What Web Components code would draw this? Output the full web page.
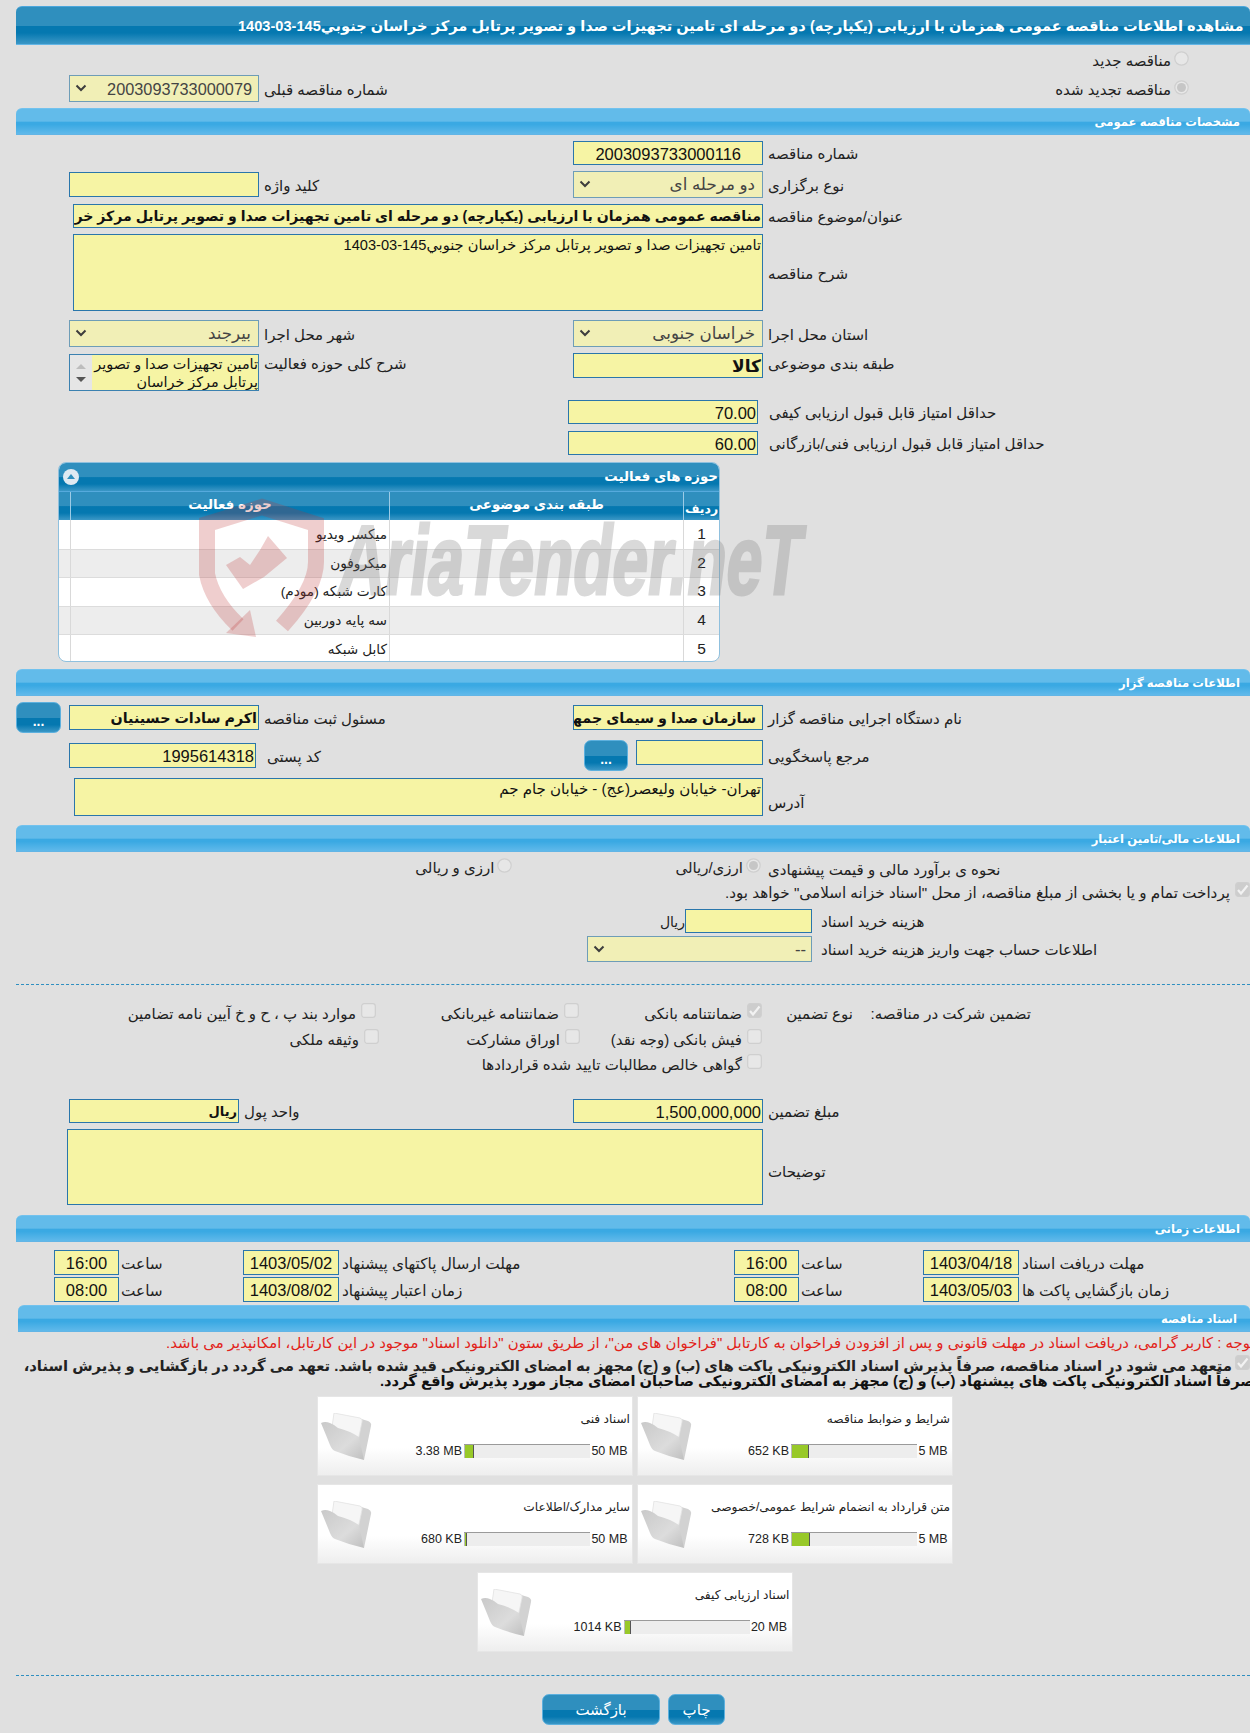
<!DOCTYPE html>
<html lang="fa">
<head>
<meta charset="utf-8">
<title>tender</title>
<style>
  html, body { margin: 0; padding: 0; background: #e0e0e0; }
</style>
</head>
<body>
<tender-page>
  <tender-bar kind="main" offset="222" style="margin-top:6px">مشاهده اطلاعات مناقصه عمومی همزمان با ارزیابی (یکپارچه) دو مرحله ای تامین تجهیزات صدا و تصویر پرتابل مرکز خراسان جنوبي145-03-1403</tender-bar>

  <form-row style="margin-top:6px;height:15px"><flag-item type="radio" style="grid-column:1;margin-right:61px">مناقصه جدید</flag-item></form-row>
  <form-row style="margin-top:9px;height:27px">
    <flag-item type="radio" checked style="grid-column:1;margin:5px 61px 0 0;align-self:start">مناقصه تجدید شده</flag-item>
    <field-label style="grid-column:3">شماره مناقصه قبلی</field-label>
    <field-box kind="select" num pad="6" style="grid-column:4;font-size:16.3px">2003093733000079</field-box>
  </form-row>
  <tender-bar style="margin-top:6px">مشخصات مناقصه عمومی</tender-bar>

  <form-row style="margin-top:6px;height:24px">
    <field-label>شماره مناقصه</field-label>
    <field-box num pad="21">2003093733000116</field-box>
  </form-row>
  <form-row style="margin-top:6px;height:27px">
    <field-label>نوع برگزاری</field-label>
    <field-box kind="select">دو مرحله ای</field-box>
    <field-label>کلید واژه</field-label>
    <field-box style="height:25px;margin-top:1px"></field-box>
  </form-row>
  <form-row wide style="margin-top:6px;height:24px">
    <field-label>عنوان/موضوع مناقصه</field-label>
    <field-box bold style="font-size:14.1px">مناقصه عمومی همزمان با ارزیابی (یکپارچه) دو مرحله ای تامین تجهیزات صدا و تصویر پرتابل مرکز خراسان جنوبي145-03-1403</field-box>
  </form-row>
  <form-row wide style="margin-top:6px;height:77px">
    <field-label>شرح مناقصه</field-label>
    <field-box kind="area" style="font-size:14.6px">تامین تجهیزات صدا و تصویر پرتابل مرکز خراسان جنوبي145-03-1403</field-box>
  </form-row>
  <form-row style="margin-top:9px;height:27px">
    <field-label>استان محل اجرا</field-label>
    <field-box kind="select">خراسان جنوبی</field-box>
    <field-label>شهر محل اجرا</field-label>
    <field-box kind="select">بیرجند</field-box>
  </form-row>
  <form-row style="margin-top:6px;height:25px">
    <field-label align="start">طبقه بندی موضوعی</field-label>
    <field-box bold style="height:25px;font-size:17px">کالا</field-box>
    <field-label align="start">شرح کلی حوزه فعالیت</field-label>
    <list-box style="height:37px;margin-top:1px">تامین تجهیزات صدا و تصویر پرتابل مرکز خراسان</list-box>
  </form-row>

  <score-row style="margin-top:22px" label="حداقل امتیاز قابل قبول ارزیابی کیفی">70.00</score-row>
  <score-row style="margin-top:7px" label="حداقل امتیاز قابل قبول ارزیابی فنی/بازرگانی">60.00</score-row>

  <activity-table style="margin-top:7px"></activity-table>

  <tender-bar style="margin-top:7px">اطلاعات مناقصه گزار</tender-bar>

  <form-row style="margin-top:6px;height:31px">
    <field-label style="height:25px;margin-top:3px">نام دستگاه اجرایی مناقصه گزار</field-label>
    <field-box bold pad="6" style="height:25px;margin-top:3px">سازمان صدا و سیمای جمهوری اسلامی ایران</field-box>
    <field-label style="height:25px;margin-top:3px">مسئول ثبت مناقصه</field-label>
    <field-box bold style="height:25px;margin-top:3px">اکرم سادات حسینیان</field-box>
    <tender-button style="margin-right:8px;width:45px;height:31px">...</tender-button>
  </form-row>
  <form-row style="margin-top:7px;height:31px">
    <field-label style="height:25px;margin-top:3px">مرجع پاسخگویی</field-label>
    <div style="display:flex;flex-direction:row;height:31px;width:190px">
      <field-box style="flex:0 0 127px;height:25px"></field-box>
      <tender-button style="margin-right:8px;width:44px;height:31px">...</tender-button>
    </div>
    <field-label style="height:25px;margin-top:3px;padding-left:8px">کد پستی</field-label>
    <field-box num style="height:25px;margin-top:3px;width:187px;justify-self:end">1995614318</field-box>
  </form-row>
  <form-row wide style="margin-top:7px;height:38px">
    <field-label style="margin-top:10px">آدرس</field-label>
    <field-box kind="area" style="margin-left:1px;font-size:15px">تهران- خیابان ولیعصر(عج) - خیابان جام جم</field-box>
  </form-row>
  <tender-bar style="margin-top:9px">اطلاعات مالی/تامین اعتبار</tender-bar>

  <form-row wide style="margin-top:6px;height:22px">
    <field-label>نحوه ی برآورد مالی و قیمت پیشنهادی</field-label>
    <div style="display:flex;gap:163px">
      <flag-item type="radio" checked style="margin-right:2px">ارزی/ریالی</flag-item>
      <flag-item type="radio">ارزی و ریالی</flag-item>
    </div>
  </form-row>
  <flag-item type="check" checked style="margin-top:2px;height:23px;font-size:15.2px">پرداخت تمام و یا بخشی از مبلغ مناقصه، از محل "اسناد خزانه اسلامی" خواهد بود.</flag-item>
  <form-row style="margin-top:4px;height:24px">
    <field-label style="padding-left:58px">هزینه خرید اسناد</field-label>
    <div style="grid-column:2 / 4;display:flex;margin-right:-49px;height:24px">
      <field-box style="flex:0 0 127px"></field-box>
      <span style="font-size:14px;line-height:27px;color:#222">ریال</span>
    </div>
  </form-row>
  <form-row style="margin-top:3px;height:26px">
    <field-label style="padding-left:58px">اطلاعات حساب جهت واریز هزینه خرید اسناد</field-label>
    <field-box kind="select" pad="5" style="grid-column:2 / 4;margin-right:-49px;margin-left:328px">--</field-box>
  </form-row>

  <dash-line style="margin-top:22px"></dash-line>

  <guarantee-panel style="margin-top:18px"></guarantee-panel>

  <form-row style="margin-top:21px;height:24px">
    <field-label>مبلغ تضمین</field-label>
    <field-box num>1,500,000,000</field-box>
    <field-label style="padding-left:0;margin-left:-15px">واحد پول</field-label>
    <field-box bold style="width:170px;justify-self:end;font-size:13px">ریال</field-box>
  </form-row>
  <form-row wide style="margin-top:6px;height:76px">
    <field-label style="margin-top:8px">توضیحات</field-label>
    <field-box kind="area" style="margin-left:-6px"></field-box>
  </form-row>
  <tender-bar style="margin-top:10px">اطلاعات زمانی</tender-bar>

  <time-row style="margin-top:8px;height:25px" label-a="مهلت دریافت اسناد" date-a="1403/04/18" time-a="16:00" label-b="مهلت ارسال پاکتهای پیشنهاد" date-b="1403/05/02" time-b="16:00"></time-row>
  <time-row style="margin-top:2px;height:25px" label-a="زمان بازگشایی پاکت ها" date-a="1403/05/03" time-a="08:00" label-b="زمان اعتبار پیشنهاد" date-b="1403/08/02" time-b="08:00"></time-row>

  <tender-bar inset style="margin-top:3px">اسناد مناقصه</tender-bar>

  <doc-notes></doc-notes>

  <doc-grid style="margin-top:3px">
    <doc-card name="شرایط و ضوابط مناقصه" used="652 KB" limit="5 MB" fill="14"></doc-card>
    <doc-card name="اسناد فنی" used="3.38 MB" limit="50 MB" fill="8"></doc-card>
    <doc-card name="متن قرارداد به انضمام شرایط عمومی/خصوصی" used="728 KB" limit="5 MB" fill="15"></doc-card>
    <doc-card name="سایر مدارک/اطلاعات" used="680 KB" limit="50 MB" fill="2"></doc-card>
    <doc-card name="اسناد ارزیابی کیفی" used="1014 KB" limit="20 MB" fill="6" style="grid-column:1 / 3;justify-self:center"></doc-card>
  </doc-grid>

  <dash-line style="margin-top:23px"></dash-line>

  <div style="display:flex;direction:rtl;justify-content:flex-start;gap:8px;margin-top:18px;padding-right:525px">
    <tender-button style="width:57px;height:31px" big>چاپ</tender-button>
    <tender-button style="width:118px;height:31px" big>بازگشت</tender-button>
  </div>

  <water-mark></water-mark>
</tender-page>

<script>
(function () {
  const FONT = "'Liberation Sans','DejaVu Sans',sans-serif";

  class TenderPage extends HTMLElement {
    constructor() {
      super();
      this.attachShadow({ mode: "open" }).innerHTML = `
      <style>
        :host { display: block; position: relative; width: 1250px; height: 1733px; overflow: hidden; background: #e0e0e0; font-family: ${FONT}; color: #222; }
        .wrap { display: flow-root; }
      </style>
      <div class="wrap"><slot></slot></div>`;
    }
  }

  class TenderBar extends HTMLElement {
    constructor() {
      super();
      const main = this.getAttribute("kind") === "main";
      const inset = this.hasAttribute("inset");
      const offset = this.getAttribute("offset");
      this.attachShadow({ mode: "open" }).innerHTML = `
      <style>
        :host { display: flex; box-sizing: border-box; margin-left: ${inset ? 18 : 16}px; height: ${main ? 39 : 27}px; border-radius: 6px 6px 0 0; align-items: center; color: #fff; font-weight: bold; white-space: nowrap; overflow: hidden;
          background: ${main
            ? "linear-gradient(#2f8fbe 0,#2f8fbe 50%,#0578b0 52%,#0578b0 70%,#3b97c6 100%)"
            : "linear-gradient(#62bbea 0,#62bbea 49%,#3aa9e3 52%,#3aa9e3 62%,#60b9ea 100%)"};
          border-top: 1px solid ${main ? "#4ca6dc" : "#72c2ee"}; border-bottom: 1px solid #62b5e6; }
        :host { justify-content: ${offset ? "flex-start" : "flex-end"}; padding: ${offset ? "0 0 0 " + offset + "px" : "0 " + (inset ? 13 : 10) + "px 0 0"}; font-size: ${main ? 14.6 : 11.6}px; }
        span { direction: rtl; display: block; flex: none; }
      </style>
      <span><slot></slot></span>`;
    }
  }

  // grid of label/control pairs, columns run from the right edge
  class FormRow extends HTMLElement {
    constructor() {
      super();
      const wide = this.hasAttribute("wide");
      this.attachShadow({ mode: "open" }).innerHTML = `
      <style>
        :host { display: grid; direction: rtl; box-sizing: border-box; grid-template-columns: ${wide ? "487px 690px" : "487px 190px 314px 190px 69px"}; }
      </style>
      <slot></slot>`;
    }
  }

  class FieldLabel extends HTMLElement {
    constructor() {
      super();
      const top = this.getAttribute("align") === "start";
      this.attachShadow({ mode: "open" }).innerHTML = `
      <style>
        :host { display: flex; align-items: ${top ? "flex-start" : "center"}; justify-content: flex-end; box-sizing: border-box; padding-left: 5px; padding-top: 2px; font-size: 15px; color: #222; white-space: nowrap; direction: rtl; }
        span { direction: rtl; }
      </style>
      <span><slot></slot></span>`;
    }
  }

  class FieldBox extends HTMLElement {
    constructor() {
      super();
      const kind = this.getAttribute("kind") || "input";
      const select = kind === "select";
      const area = kind === "area";
      const num = this.hasAttribute("num");
      const bold = this.hasAttribute("bold");
      const pad = this.getAttribute("pad") || (select ? 7 : 1);
      this.attachShadow({ mode: "open" }).innerHTML = `
      <style>
        :host { display: flex; box-sizing: border-box; overflow: hidden; direction: rtl; white-space: ${area ? "normal" : "nowrap"};
          background: ${select ? "#f1efb6" : "#f6f4a4"}; border: 1px solid ${select ? "#6e9db7" : "#2a76ab"};
          color: ${select ? "#444" : "#111"}; font-size: ${num ? 16.5 : bold ? 14.3 : select ? 16.7 : 14.8}px; font-weight: ${bold ? "bold" : "normal"};
          align-items: ${area ? "flex-start" : "center"}; padding: ${area ? "1px 1px" : "2px " + pad + "px 0 0"}; line-height: 1.25; }
        .val { flex: 1; min-width: 0; }
        .chev { flex: none; width: 12px; height: 10px; margin-left: 5px; margin-top: -3px; }
      </style>
      <div class="val"><slot></slot></div>
      ${select ? '<svg class="chev" viewBox="0 0 12 10"><path d="M1.5 2.5 6 7l4.5-4.5" fill="none" stroke="#3d3d3d" stroke-width="2"/></svg>' : ""}`;
    }
  }

  class ListBox extends HTMLElement {
    constructor() {
      super();
      this.attachShadow({ mode: "open" }).innerHTML = `
      <style>
        :host { display: flex; box-sizing: border-box; direction: rtl; background: #f6f4a4; border: 1px solid #3b81b0; font-size: 14.4px; line-height: 18px; color: #111; overflow: hidden; }
        .t { flex: 1; overflow: hidden; }
        .s { flex: 0 0 22px; background: #e6e6e6; display: flex; flex-direction: column; justify-content: space-between; align-items: center; padding: 9px 0 8px; box-sizing: border-box; }
        .up { width: 0; height: 0; border: 5px solid transparent; border-top: 0; border-bottom: 5px solid #bdbdbd; }
        .dn { width: 0; height: 0; border: 5px solid transparent; border-bottom: 0; border-top: 5px solid #555; }
      </style>
      <div class="t"><slot></slot></div>
      <div class="s"><div class="up"></div><div class="dn"></div></div>`;
    }
  }

  class ScoreRow extends HTMLElement {
    constructor() {
      super();
      this.attachShadow({ mode: "open" }).innerHTML = `
      <style>
        :host { display: grid; direction: rtl; grid-template-columns: 492px 190px; height: 24px; }
        .l { font-size: 15px; direction: rtl; display: flex; justify-content: flex-end; align-items: center; padding: 2px 0 0 11px; white-space: nowrap; box-sizing: border-box; }
        .b { box-sizing: border-box; background: #f6f4a4; border: 1px solid #2a76ab; font-size: 16.5px; color: #111; direction: ltr; display: flex; align-items: center; justify-content: flex-end; padding: 2px 1px 0 0; }
      </style>
      <div class="l"><span>${this.getAttribute("label")}</span></div>
      <div class="b"><slot></slot></div>`;
    }
  }

  class ActivityTable extends HTMLElement {
    constructor() {
      super();
      const rows = ["میکسر ویدیو", "میکروفون", "کارت شبکه (مودم)", "سه پایه دوربین", "کابل شبکه"];
      const grad = "linear-gradient(#2f8fbe 0,#2f8fbe 50%,#0578b0 52%,#0578b0 75%,#3b97c6 100%)";
      this.attachShadow({ mode: "open" }).innerHTML = `
      <style>
        :host { display: block; box-sizing: border-box; margin-left: 58px; width: 662px; height: 200px; border-radius: 8px; overflow: hidden; border: 1px solid #8fc0de; background: #fff; direction: rtl; }
        .title { height: 28px; background: ${grad}; display: flex; align-items: center; justify-content: space-between; color: #fff; font-weight: bold; font-size: 13.4px; padding: 0 1px 1px 4px; box-sizing: border-box; }
        .toggle { width: 16px; height: 16px; border-radius: 50%; background: #dfeaf2; display: flex; align-items: center; justify-content: center; }
        .toggle i { width: 0; height: 0; border: 4px solid transparent; border-top: 0; border-bottom: 5px solid #2f8fbe; }
        .row { display: grid; grid-template-columns: 36px 294px 319px 1fr; }
        .head { height: 28px; background: ${grad}; color: #fff; font-weight: bold; font-size: 13.4px; border-top: 1px solid #56aadd; }
        .head div { display: flex; align-items: center; justify-content: center; border-left: 1px solid #9ccbe6; padding-bottom: 4px; box-sizing: border-box; }
        .head div:first-child { padding: 5px 0 0; font-size: 12.5px; }
        .head div:last-child { border: 0; }
        .body { height: 28.6px; font-size: 13.7px; color: #222; border-top: 1px solid #dcdcdc; box-sizing: border-box; }
        .body:nth-child(odd) { background: #ededed; }
        .body:nth-child(4) { border-top: 0; }
        .body div { display: flex; align-items: center; padding-bottom: 1px; border-left: 1px solid #d9d9d9; box-sizing: border-box; }
        .body div:first-child { justify-content: center; font-size: 15.5px; }
        .body div:nth-child(3) { padding-right: 2px; }
        .body div:last-child { border: 0; }
      </style>
      <div class="title"><span>حوزه های فعالیت</span><span class="toggle"><i></i></span></div>
      <div class="row head"><div>ردیف</div><div>طبقه بندی موضوعی</div><div>حوزه فعالیت</div><div></div></div>
      ${rows.map((r, i) => `<div class="row body"><div>${i + 1}</div><div></div><div>${r}</div><div></div></div>`).join("")}`;
    }
  }

  class TenderButton extends HTMLElement {
    constructor() {
      super();
      const big = this.hasAttribute("big");
      this.attachShadow({ mode: "open" }).innerHTML = `
      <style>
        :host { display: flex; box-sizing: border-box; align-items: ${big ? "center" : "flex-end"}; justify-content: center; border-radius: 7px; border: 1px solid #5cb0de; color: #fff; font-size: ${big ? 15 : 14}px; font-weight: ${big ? "normal" : "bold"}; padding-bottom: ${big ? 0 : 3}px;
          background: linear-gradient(#2f8fbe 0,#2f8fbe 50%,#0578b0 52%,#0578b0 75%,#3b97c6 100%); direction: rtl; flex: none; }
      </style>
      <slot></slot>`;
    }
  }

  class FlagItem extends HTMLElement {
    constructor() {
      super();
      const type = this.getAttribute("type") || "check";
      const on = this.hasAttribute("checked");
      const mark = !on ? "" : type === "radio"
        ? '<circle cx="7.5" cy="7.5" r="4.5" fill="#c6c6c6"/>'
        : '<path d="M3 8l3 3.5L12.5 3.5" fill="none" stroke="#f2f2f2" stroke-width="2.2"/>';
      const box = on ? "#cdcdcd" : "#e7e7e7";
      const shape = type === "radio"
        ? '<circle cx="7.5" cy="7.5" r="6.7" fill="#e7e7e7" stroke="#cfcfcf" stroke-width="1.2"/>'
        : `<rect x=".7" y=".7" width="13.6" height="13.6" rx="2.5" fill="${box}" stroke="#cfcfcf" stroke-width="1.2"/>`;
      this.attachShadow({ mode: "open" }).innerHTML = `
      <style>
        :host { display: flex; direction: rtl; align-items: flex-start; gap: ${type === "radio" ? 3 : 5}px; font-size: 15px; color: #222; white-space: nowrap; }
        svg { flex: none; width: 15px; height: 15px; }
        span { line-height: 20px; margin-top: ${type === "radio" ? 0 : 1}px; }
      </style>
      <svg viewBox="0 0 15 15">${shape}${mark}</svg><span><slot></slot></span>`;
    }
  }

  class DashLine extends HTMLElement {
    constructor() {
      super();
      this.attachShadow({ mode: "open" }).innerHTML = `
      <style>:host { display: block; margin-left: 16px; height: 0; border-top: 1px dashed #2f8fc0; }</style>`;
    }
  }

  class GuaranteePanel extends HTMLElement {
    constructor() {
      super();
      const g = (txt, on) => `<flag-item type="check" ${on ? "checked" : ""}>${txt}</flag-item>`;
      this.attachShadow({ mode: "open" }).innerHTML = `
      <style>
        :host { display: block; direction: rtl; font-size: 15px; height: 75px; }
        .row { display: flex; height: 25.5px; white-space: nowrap; }
        .row > div { flex: none; }
        .lab { padding-top: 1px; line-height: 20px; box-sizing: border-box; }
      </style>
      <div class="row" style="padding-right:219px">
        <div class="lab" style="width:178px">تضمین شرکت در مناقصه:</div>
        <div class="lab" style="width:91px">نوع تضمین</div>
        <div style="width:183px">${g("ضمانتنامه بانکی", true)}</div>
        <div style="width:203px">${g("ضمانتنامه غیربانکی")}</div>
        <div>${g("موارد بند پ ، ح و خ آیین نامه تضامین")}</div>
      </div>
      <div class="row" style="padding-right:488px">
        <div style="width:182px">${g("فیش بانکی (وجه نقد)")}</div>
        <div style="width:201px">${g("اوراق مشارکت")}</div>
        <div>${g("وثیقه ملکی")}</div>
      </div>
      <div class="row" style="padding-right:488px">
        <div>${g("گواهی خالص مطالبات تایید شده قراردادها")}</div>
      </div>`;
    }
  }

  class TimeRow extends HTMLElement {
    constructor() {
      super();
      const a = (n) => this.getAttribute(n);
      const pair = (lab, date, time, w) => `
        <div class="lab" style="flex-basis:${w}px"><span>${lab}</span></div>
        <div class="box date">${date}</div>
        <div class="sa"><span>ساعت</span></div>
        <div class="box time">${time}</div>`;
      this.attachShadow({ mode: "open" }).innerHTML = `
      <style>
        :host { display: flex; direction: rtl; font-size: 15.3px; }
        .lab { flex: none; box-sizing: border-box; display: flex; justify-content: flex-end; align-items: center; padding: 2px 0 0 3px; white-space: nowrap; }
        .box { flex: none; box-sizing: border-box; background: #f6f4a4; border: 1px solid #2a76ab; font-size: 16.5px; color: #111; display: flex; align-items: center; justify-content: center; direction: ltr; padding-top: 2px; }
        .date { width: 96px; }
        .time { width: 65px; }
        .sa { flex: 0 0 124px; box-sizing: border-box; display: flex; justify-content: flex-end; align-items: center; padding: 2px 0 0 2px; white-space: nowrap; }
      </style>
      ${pair(a("label-a"), a("date-a"), a("time-a"), 231)}
      ${pair(a("label-b"), a("date-b"), a("time-b"), 395)}`;
    }
  }

  class DocNotes extends HTMLElement {
    constructor() {
      super();
      this.attachShadow({ mode: "open" }).innerHTML = `
      <style>
        :host { display: block; position: relative; height: 61px; direction: rtl; white-space: nowrap; overflow: hidden; }
        .red { color: #e2231a; font-size: 14.9px; display: flex; justify-content: flex-end; padding: 3px 0 0 166px; height: 20px; box-sizing: border-box; }
        .line { font-weight: bold; color: #111; height: 17px; display: flex; }
        .l1 { margin-top: 3px; align-items: flex-start; }
        .l1 flag-item { font-size: 14.8px; gap: 3px; }
        .l2 { font-size: 14.7px; justify-content: flex-end; padding-left: 380px; margin-top: 1px; }
        span { flex: none; line-height: 17px; }
      </style>
      <div class="red"><span>توجه : کاربر گرامی، دریافت اسناد در مهلت قانونی و پس از افزودن فراخوان به کارتابل "فراخوان های من"، از طریق ستون "دانلود اسناد" موجود در این کارتابل، امکانپذیر می باشد.</span></div>
      <div class="line l1"><flag-item type="check" checked>متعهد می شود در اسناد مناقصه، صرفاً پذیرش اسناد الکترونیکی پاکت های (ب) و (ج) مجهز به امضای الکترونیکی قید شده باشد. تعهد می گردد در بازگشایی و پذیرش اسناد،</flag-item></div>
      <div class="line l2"><span>صرفاً اسناد الکترونیکی پاکت های پیشنهاد (ب) و (ج) مجهز به امضای الکترونیکی صاحبان امضای مجاز مورد پذیرش واقع گردد.</span></div>`;
    }
  }

  class DocGrid extends HTMLElement {
    constructor() {
      super();
      this.attachShadow({ mode: "open" }).innerHTML = `
      <style>
        :host { display: grid; direction: rtl; grid-template-columns: 316px 317px; column-gap: 4px; row-gap: 8px; grid-auto-rows: 80px; justify-content: start; padding-right: 297px; }
      </style>
      <slot></slot>`;
    }
  }

  class DocCard extends HTMLElement {
    constructor() {
      super();
      const a = (n) => this.getAttribute(n);
      const limitWide = a("limit").length > 4 ? 40 : 33;
      this.attachShadow({ mode: "open" }).innerHTML = `
      <style>
        :host { display: block; box-sizing: border-box; width: 316px; height: 80px; position: relative; direction: rtl; border: 1px solid #e6e6e6; background: linear-gradient(#fff 0,#fff 65%,#eeeeee 100%); font-size: 12.5px; color: #222; }
        .name { padding: 15px 2px 0 0; height: 33px; box-sizing: border-box; white-space: nowrap; font-size: 12.2px; }
        .meter { display: flex; align-items: center; height: 14px; margin-top: 14px; padding-right: 2px; }
        .limit { box-sizing: border-box; padding-right: 1px; white-space: nowrap; direction: ltr; text-align: center; }
        .track { flex: 0 0 126px; height: 14px; box-sizing: border-box; background: #ededed; border-top: 1px solid #9a9a9a; direction: ltr; display: flex; }
        .fill { background: #98c929; border-right: 1px solid #555; height: 100%; border-left: 1px solid #bbb; box-sizing: border-box; }
        .used { padding-right: 2px; white-space: nowrap; direction: ltr; }
        svg { position: absolute; left: 2px; top: 16px; width: 53px; height: 47px; }
      </style>
      <div class="name">${a("name")}</div>
      <div class="meter">
        <div class="limit" style="flex:0 0 ${limitWide}px">${a("limit")}</div>
        <div class="track"><div class="fill" style="width:${a("fill")}%"></div></div>
        <div class="used">${a("used")}</div>
      </div>
      <svg viewBox="0 0 53 47">
        <defs>
          <linearGradient id="f" x1="0" y1="0" x2="1" y2="1"><stop offset="0" stop-color="#c9c9c9"/><stop offset=".6" stop-color="#dcdcdc"/><stop offset="1" stop-color="#bfbfbf"/></linearGradient>
        </defs>
        <path d="M38 5 L48 8 Q52 10 51 13 L44 47 L34 28 Z" fill="#d2d2d2"/>
        <path d="M14 0 L40 5 Q43 6 42 9 L38 28 L12 14 Z" fill="#f6f6f6" stroke="#e2e2e2" stroke-width=".8"/>
        <path d="M1 10 Q5 8 10 10 Q15 12 18 15 Q30 18 39 24 L44 47 Q30 44 15 38 Q12 37 10 32 Q6 22 1 10 Z" fill="url(#f)"/>
      </svg>`;
    }
  }

  // the site's stamp over the activity table
  class WaterMark extends HTMLElement {
    constructor() {
      super();
      this.attachShadow({ mode: "open" }).innerHTML = `
      <style>
        :host { display: block; position: absolute; left: 190px; top: 490px; width: 630px; height: 160px; pointer-events: none; }
        svg { position: absolute; left: 0; top: 0; width: 160px; height: 160px; }
        .t { position: absolute; left: 150px; top: 14px; white-space: nowrap; font: bold 98px 'Liberation Sans',sans-serif; color: #777; opacity: .27; -webkit-text-stroke: 3px #777; transform-origin: 0 50%; transform: skewX(-7deg) scaleX(.655); direction: ltr; }
      </style>
      <svg viewBox="0 0 160 160">
        <path fill="none" stroke="rgba(190,50,50,.24)" stroke-width="16" d="M92 136 Q126 98 126 72 L126 34 L72 17 L17 34 L17 84 Q22 110 48 135"/>
        <g fill="rgba(190,50,50,.24)">
          <path d="M36 143 L66 147 L60 120 Z"/>
          <path d="M78 46 L97 68 L74 87 L53 99 L36 75 L50 67 L60 75 L70 60 Z"/>
        </g>
      </svg>
      <div class="t">AriaTender.neT</div>`;
    }
  }

  customElements.define("tender-page", TenderPage);
  customElements.define("tender-bar", TenderBar);
  customElements.define("form-row", FormRow);
  customElements.define("field-label", FieldLabel);
  customElements.define("field-box", FieldBox);
  customElements.define("list-box", ListBox);
  customElements.define("score-row", ScoreRow);
  customElements.define("activity-table", ActivityTable);
  customElements.define("tender-button", TenderButton);
  customElements.define("flag-item", FlagItem);
  customElements.define("dash-line", DashLine);
  customElements.define("guarantee-panel", GuaranteePanel);
  customElements.define("time-row", TimeRow);
  customElements.define("doc-notes", DocNotes);
  customElements.define("doc-grid", DocGrid);
  customElements.define("doc-card", DocCard);
  customElements.define("water-mark", WaterMark);
})();
</script>
</body>
</html>
